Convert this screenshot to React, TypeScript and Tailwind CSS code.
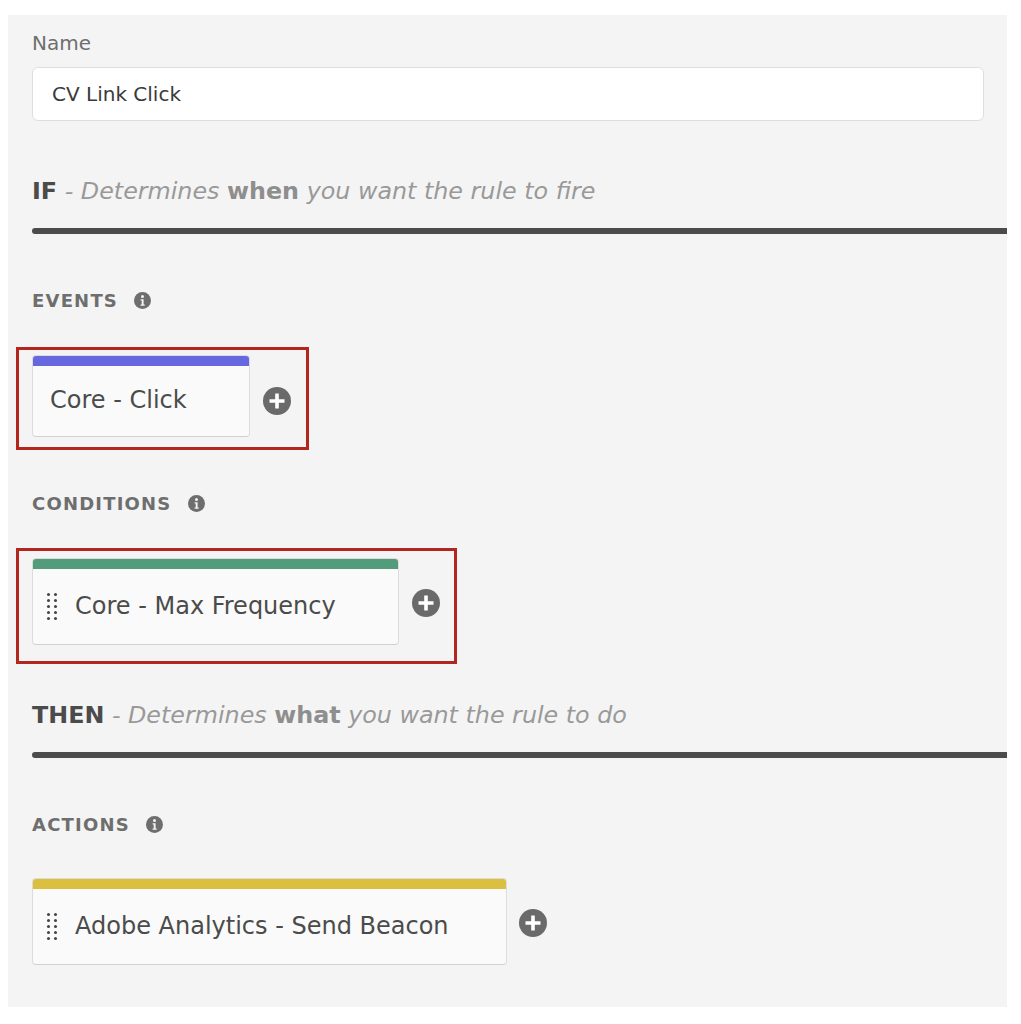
import React from 'react';

const InfoIcon = () => (
  <svg width="17" height="17" viewBox="0 0 17 17" className="shrink-0">
    <circle cx="8.5" cy="8.5" r="8.5" fill="#6e6e6e" />
    <circle cx="8.5" cy="4.6" r="1.5" fill="#f4f4f4" />
    <path d="M6.6 7.2h3v5.2h1.1v1.4H6.6v-1.4h1.1V8.6H6.6z" fill="#f4f4f4" />
  </svg>
);

const PlusIcon = () => (
  <svg width="28" height="28" viewBox="0 0 28 28" className="shrink-0">
    <circle cx="14" cy="14" r="14" fill="#6a6a6a" />
    <path d="M12.2 6.5h3.6v5.7h5.7v3.6h-5.7v5.7h-3.6v-5.7H6.5v-3.6h5.7z" fill="#fff" />
  </svg>
);

const DragDots = () => (
  <div className="grid grid-cols-2 gap-x-[4px] gap-y-[3px] w-[10px] shrink-0">
    {Array.from({ length: 10 }).map((_, i) => (
      <span key={i} className="block w-[3px] h-[3px] rounded-full bg-[#444]" />
    ))}
  </div>
);

type CardProps = {
  label: string;
  color: string;
  width: string;
  drag?: boolean;
  height: string;
};

const RuleCard = ({ label, color, width, drag, height }: CardProps) => (
  <div className={`flex flex-col rounded-[4px] bg-[#fafafa] border border-[#dcdcdc] border-b-[#d0d0d0] overflow-hidden shrink-0 ${width} ${height}`}>
    <div className={`h-[10px] ${color}`} />
    <div className={`flex flex-1 items-center ${drag ? 'pl-[14px] gap-[18px]' : 'pl-[17px]'}`}>
      {drag && <DragDots />}
      <span className="text-[24px] leading-none text-[#4b4b4b] pb-[2px] whitespace-nowrap">{label}</span>
    </div>
  </div>
);

const SectionLabel = ({ text, className }: { text: string; className: string }) => (
  <div className={`flex items-center gap-[16px] h-[24px] ${className}`}>
    <span className="text-[18px] font-bold tracking-[1.2px] text-[#6e6e6e]">{text}</span>
    <InfoIcon />
  </div>
);

export default function App() {
  return (
    <div className="w-[1021px] h-[1024px] bg-white pt-[15px] pl-2" style={{ fontFamily: '"DejaVu Sans", Verdana, sans-serif' }}>
      <div className="w-[999px] h-[992px] bg-[#f4f4f4] pl-6 pt-4 flex flex-col">
        <label className="text-[20px] leading-[24px] text-[#6e6e6e]">Name</label>
        <div className="mt-[12px] h-[54px] w-[952px] bg-white border border-[#dedede] rounded-[6px] flex items-center pl-[19px] text-[20px] text-[#3a3a3a]">
          CV Link Click
        </div>

        <h2 className="mt-[54px] h-[32px] leading-[32px] text-[23.8px] text-[#999] whitespace-nowrap">
          <span className="font-bold text-[#4b4b4b]">IF</span>
          <span className="italic"> - Determines </span>
          <span className="font-bold text-[#8e8e8e]">when</span>
          <span className="italic"> you want the rule to fire</span>
        </h2>
        <div className="mt-[21px] h-[6px] bg-[#4b4b4b] rounded-l-full" />

        <SectionLabel text="EVENTS" className="mt-[54px]" />
        <div className="mt-[35px] -ml-4 w-[293px] h-[103px] border-[3px] border-[#b3261e] pt-[5px] pl-[13px] flex items-start gap-[13px]">
          <RuleCard label="Core - Click" color="bg-[#6767e0]" width="w-[218px]" height="h-[82px]" />
          <div className="mt-[32px]"><PlusIcon /></div>
        </div>

        <SectionLabel text="CONDITIONS" className="mt-[41px]" />
        <div className="mt-[33px] -ml-4 w-[441px] h-[116px] border-[3px] border-[#b3261e] pt-[7px] pl-[13px] flex items-start gap-[13px]">
          <RuleCard label="Core - Max Frequency" color="bg-[#529b7b]" width="w-[367px]" height="h-[87px]" drag />
          <div className="mt-[31px]"><PlusIcon /></div>
        </div>

        <h2 className="mt-[35px] h-[32px] leading-[32px] text-[23.8px] text-[#999] whitespace-nowrap">
          <span className="font-bold text-[#4b4b4b]">THEN</span>
          <span className="italic"> - Determines </span>
          <span className="font-bold text-[#8e8e8e]">what</span>
          <span className="italic"> you want the rule to do</span>
        </h2>
        <div className="mt-[21px] h-[6px] bg-[#4b4b4b] rounded-l-full" />

        <SectionLabel text="ACTIONS" className="mt-[54px]" />
        <div className="mt-[42px] flex items-start gap-[12px]">
          <RuleCard label="Adobe Analytics - Send Beacon" color="bg-[#dbbf41]" width="w-[475px]" height="h-[87px]" drag />
          <div className="mt-[31px]"><PlusIcon /></div>
        </div>
      </div>
    </div>
  );
}
